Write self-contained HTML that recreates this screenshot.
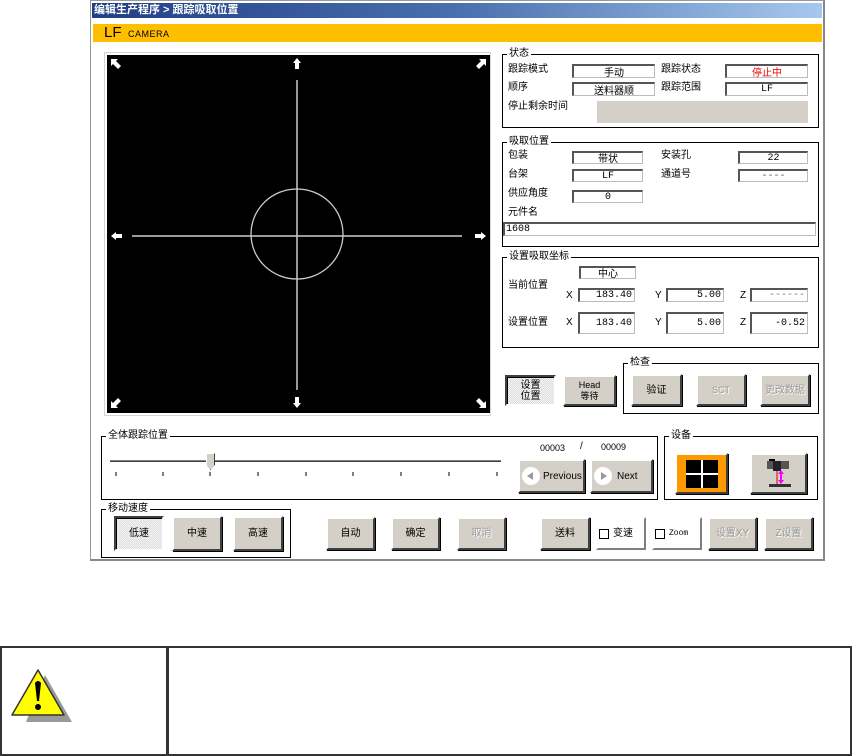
<!DOCTYPE html><html><head><meta charset="utf-8"><style>
*{margin:0;padding:0;box-sizing:border-box}
body{width:852px;height:756px;background:#fff;position:relative;overflow:hidden;font-family:"Liberation Sans","Noto Sans CJK SC",sans-serif;font-size:10px;color:#000}
.a{position:absolute}
.win{left:90px;top:0;width:735px;height:561px;background:#fff;border:1px solid #999;border-right:2px solid #888;border-bottom:2px solid #888}
.grp{position:absolute;border:1px solid #000}
.grp>.t{position:absolute;top:-7px;left:4px;background:#fff;padding:0 2px;font-size:10px;line-height:12px}
.lb{position:absolute;font-size:10px;line-height:12px}
.bx{position:absolute;background:#fff;border:1px solid #bbb;border-top:2px solid #555;border-left:2px solid #555;font-size:10px;display:flex;align-items:center;justify-content:center;font-family:"Liberation Mono","Noto Sans CJK SC",monospace;white-space:nowrap}
.r{justify-content:flex-end;padding-right:2px}
.btn{position:absolute;background:#d4d0c8;border:2px solid;border-color:#fff #404040 #404040 #fff;box-shadow:1px 1px 0 #000;display:flex;align-items:center;justify-content:center;font-size:10px;text-align:center;line-height:11px}
.dis{color:#9a9a9a;text-shadow:1px 1px 0 #fff}
.pr{background:repeating-conic-gradient(#ddd 0 25%,#f4f4f4 0 50%) 0 0/2px 2px;border-color:#404040 #fff #fff #404040;box-shadow:inset 1px 1px 0 #000}
</style></head><body>
<div class="a win"></div>
<div class="a" style="left:92px;top:3px;width:730px;height:15px;background:linear-gradient(90deg,#1f3f86,#4a6fae 50%,#a6c8ee);color:#fff;font-weight:bold;font-size:11px;line-height:15px;padding-left:2px">编辑生产程序 &gt; 跟踪吸取位置</div>
<div class="a" style="left:93px;top:24px;width:729px;height:18px;background:#ffbf00"><span style="position:absolute;left:11px;top:0;font-size:15px;line-height:18px">LF</span><span style="position:absolute;left:35px;top:4px;font-size:9px;letter-spacing:0.5px;line-height:12px">CAMERA</span></div>

<!-- camera -->
<div class="a" style="left:104px;top:52px;width:387px;height:364px;border:1px solid #d8d4cc"></div>
<div class="a" style="left:107px;top:55px;width:383px;height:358px;background:#000">
<svg width="383" height="358" style="position:absolute;left:0;top:0">
<line x1="190" y1="25" x2="190" y2="335" stroke="#ccc" stroke-width="1.5"/>
<line x1="25" y1="181" x2="355" y2="181" stroke="#ccc" stroke-width="1.5"/>
<ellipse cx="190" cy="179" rx="46" ry="45" fill="none" stroke="#ccc" stroke-width="1.3"/>
<g fill="#fff">
<path d="M186 8 L190 3 L194 8 L192 8 L192 14 L188 14 L188 8Z"/>
<path d="M186 348 L190 353 L194 348 L192 348 L192 342 L188 342 L188 348Z"/>
<path d="M4 181 L9 177 L9 179 L15 179 L15 183 L9 183 L9 185Z"/>
<path d="M379 181 L374 177 L374 179 L368 179 L368 183 L374 183 L374 185Z"/>
<path d="M4 4 L11 4 L9 6 L14 11 L11 14 L6 9 L4 11Z"/>
<path d="M379 4 L372 4 L374 6 L369 11 L372 14 L377 9 L379 11Z"/>
<path d="M4 353 L11 353 L9 351 L14 346 L11 343 L6 348 L4 346Z"/>
<path d="M379 353 L372 353 L374 351 L369 346 L372 343 L377 348 L379 346Z"/>
</g></svg></div>

<!-- 状态 -->
<div class="grp" style="left:502px;top:54px;width:317px;height:74px"><span class="t">状态</span></div>
<span class="lb" style="left:508px;top:64px">跟踪模式</span><div class="bx" style="left:572px;top:64px;width:83px;height:14px">手动</div>
<span class="lb" style="left:661px;top:64px">跟踪状态</span><div class="bx" style="left:725px;top:64px;width:83px;height:14px;color:#e00">停止中</div>
<span class="lb" style="left:508px;top:82px">顺序</span><div class="bx" style="left:572px;top:82px;width:83px;height:14px">送料器顺</div>
<span class="lb" style="left:661px;top:82px">跟踪范围</span><div class="bx" style="left:725px;top:82px;width:83px;height:14px">LF</div>
<span class="lb" style="left:508px;top:101px">停止剩余时间</span><div class="a" style="left:597px;top:101px;width:211px;height:22px;background:#d4d0c8"></div>

<!-- 吸取位置 -->
<div class="grp" style="left:502px;top:142px;width:317px;height:105px"><span class="t">吸取位置</span></div>
<span class="lb" style="left:508px;top:150px">包装</span><div class="bx" style="left:572px;top:151px;width:71px;height:13px">带状</div>
<span class="lb" style="left:661px;top:150px">安装孔</span><div class="bx" style="left:738px;top:151px;width:70px;height:13px">22</div>
<span class="lb" style="left:508px;top:169px">台架</span><div class="bx" style="left:572px;top:169px;width:71px;height:13px">LF</div>
<span class="lb" style="left:661px;top:169px">通道号</span><div class="bx" style="left:738px;top:169px;width:70px;height:13px;color:#555">----</div>
<span class="lb" style="left:508px;top:188px">供应角度</span><div class="bx" style="left:572px;top:190px;width:71px;height:13px">0</div>
<span class="lb" style="left:508px;top:207px">元件名</span><div class="bx" style="left:503px;top:222px;width:313px;height:14px;justify-content:flex-start;padding-left:1px">1608</div>

<!-- 设置吸取坐标 -->
<div class="grp" style="left:502px;top:257px;width:317px;height:91px"><span class="t">设置吸取坐标</span></div>
<div class="bx" style="left:579px;top:266px;width:57px;height:13px">中心</div>
<span class="lb" style="left:508px;top:280px">当前位置</span>
<span class="lb" style="left:566px;top:290px">X</span><div class="bx r" style="left:578px;top:288px;width:57px;height:14px">183.40</div>
<span class="lb" style="left:655px;top:290px">Y</span><div class="bx r" style="left:666px;top:288px;width:58px;height:14px">5.00</div>
<span class="lb" style="left:740px;top:290px">Z</span><div class="bx r" style="left:750px;top:288px;width:58px;height:14px;color:#777">------</div>
<span class="lb" style="left:508px;top:317px">设置位置</span>
<span class="lb" style="left:566px;top:317px">X</span><div class="bx r" style="left:578px;top:312px;width:57px;height:22px">183.40</div>
<span class="lb" style="left:655px;top:317px">Y</span><div class="bx r" style="left:666px;top:312px;width:58px;height:22px">5.00</div>
<span class="lb" style="left:740px;top:317px">Z</span><div class="bx r" style="left:750px;top:312px;width:58px;height:22px">-0.52</div>

<div class="btn pr" style="left:505px;top:375px;width:51px;height:31px">设置<br>位置</div>
<div class="btn" style="left:563px;top:375px;width:53px;height:31px;font-size:9px">Head<br>等待</div>
<div class="grp" style="left:623px;top:363px;width:196px;height:51px"><span class="t">检查</span></div>
<div class="btn" style="left:631px;top:374px;width:51px;height:32px">验证</div>
<div class="btn dis" style="left:696px;top:374px;width:50px;height:32px;font-size:9px">SCT</div>
<div class="btn dis" style="left:760px;top:374px;width:50px;height:32px">更改数据</div>

<!-- 全体跟踪位置 -->
<div class="grp" style="left:101px;top:436px;width:557px;height:64px"><span class="t">全体跟踪位置</span></div>
<div class="a" style="left:110px;top:460px;width:391px;height:3px;border-top:1px solid #808080;border-bottom:1px solid #fff;background:#404040"></div>
<div class="a" style="left:206px;top:453px;width:9px;height:17px;background:#d4d0c8;border:1px solid;border-color:#fff #404040 #404040 #fff;clip-path:polygon(0 0,100% 0,100% 70%,50% 100%,0 70%)"></div>
<svg class="a" style="left:110px;top:472px" width="395" height="6"><g stroke="#000"><line x1="6" y1="0" x2="6" y2="4"/><line x1="53" y1="0" x2="53" y2="4"/><line x1="100" y1="0" x2="100" y2="4"/><line x1="148" y1="0" x2="148" y2="4"/><line x1="196" y1="0" x2="196" y2="4"/><line x1="243" y1="0" x2="243" y2="4"/><line x1="291" y1="0" x2="291" y2="4"/><line x1="339" y1="0" x2="339" y2="4"/><line x1="387" y1="0" x2="387" y2="4"/></g></svg>
<span class="lb" style="left:540px;top:442px;font-size:9px">00003</span><span class="lb" style="left:580px;top:441px">/</span><span class="lb" style="left:601px;top:441px;font-size:9px">00009</span>
<div class="btn" style="left:518px;top:459px;width:67px;height:34px;justify-content:flex-start;padding-left:2px"><span style="display:inline-block;width:18px;height:18px;border-radius:50%;background:#fff;position:relative;margin-right:3px"><span style="position:absolute;left:5px;top:5px;border:4px solid transparent;border-right:6px solid #999;border-left:0"></span></span>Previous</div>
<div class="btn" style="left:590px;top:459px;width:63px;height:34px;justify-content:flex-start;padding-left:2px"><span style="display:inline-block;width:18px;height:18px;border-radius:50%;background:#fff;position:relative;margin-right:5px"><span style="position:absolute;left:7px;top:5px;border:4px solid transparent;border-left:6px solid #999;border-right:0"></span></span>Next</div>

<!-- 设备 -->
<div class="grp" style="left:664px;top:436px;width:154px;height:64px"><span class="t">设备</span></div>
<div class="btn" style="left:675px;top:453px;width:53px;height:41px;background:#f90"><div style="width:32px;height:28px;background:#000;position:relative"><div style="position:absolute;left:15px;top:0;width:2px;height:28px;background:#fff"></div><div style="position:absolute;left:0;top:13px;width:32px;height:2px;background:#fff"></div></div></div>
<div class="btn" style="left:750px;top:453px;width:57px;height:41px"><svg width="36" height="32"><rect x="6" y="3" width="22" height="8" fill="#555"/><rect x="12" y="3" width="8" height="10" fill="#222"/><rect x="8" y="1" width="6" height="2" fill="#000"/><line x1="16" y1="13" x2="16" y2="26" stroke="#d00"/><line x1="20" y1="13" x2="20" y2="24" stroke="#f0f" stroke-width="2"/><path d="M17 16 L20 12 L23 16Z M17 22 L20 26 L23 22Z" fill="#f0f"/><rect x="8" y="26" width="22" height="3" fill="#333"/></svg></div>

<!-- 移动速度 -->
<div class="grp" style="left:101px;top:509px;width:190px;height:49px"><span class="t">移动速度</span></div>
<div class="btn pr" style="left:114px;top:516px;width:50px;height:35px">低速</div>
<div class="btn" style="left:172px;top:516px;width:50px;height:35px">中速</div>
<div class="btn" style="left:233px;top:516px;width:50px;height:35px">高速</div>
<div class="btn" style="left:326px;top:517px;width:49px;height:33px">自动</div>
<div class="btn" style="left:391px;top:517px;width:49px;height:33px">确定</div>
<div class="btn dis" style="left:457px;top:517px;width:49px;height:33px">取消</div>
<div class="btn" style="left:540px;top:517px;width:50px;height:33px">送料</div>
<div class="btn" style="left:596px;top:517px;width:50px;height:33px;background:#fff;box-shadow:none;border-color:#fff #808080 #808080 #fff;justify-content:flex-start;padding-left:1px"><span style="width:10px;height:10px;border:1px solid #000;margin-right:4px;display:inline-block"></span>变速</div>
<div class="btn" style="left:652px;top:517px;width:50px;height:33px;background:#fff;box-shadow:none;border-color:#fff #808080 #808080 #fff;justify-content:flex-start;padding-left:1px;font-size:8px;font-family:'Liberation Mono',monospace"><span style="width:10px;height:10px;border:1px solid #000;margin-right:4px;display:inline-block"></span>Zoom</div>
<div class="btn dis" style="left:708px;top:517px;width:49px;height:33px">设置XY</div>
<div class="btn dis" style="left:764px;top:517px;width:49px;height:33px">Z设置</div>

<!-- bottom table -->
<div class="a" style="left:0;top:646px;width:852px;height:110px;border:2px solid #333"></div>
<div class="a" style="left:166px;top:646px;width:3px;height:110px;background:#333"></div>
<svg class="a" style="left:8px;top:668px" width="64" height="60"><path d="M32 3 L59 50 L13 50 Z" fill="#999" transform="translate(5,4)"/><path d="M30 2 L56 47 L4 47 Z" fill="#ff0" stroke="#333" stroke-width="1.5" stroke-linejoin="round"/><path d="M27 15 Q30 11 33 15 L31 33 L29 33 Z" fill="#000"/><circle cx="30" cy="39" r="3" fill="#000"/></svg>
</body></html>
